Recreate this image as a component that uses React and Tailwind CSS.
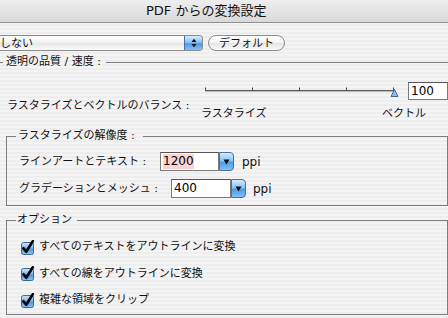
import React from 'react';

const aquaBlue =
  'bg-[linear-gradient(to_bottom,#d4ebff_0%,#8cc3f4_45%,#4d9be8_55%,#7fc0f8_100%)]';

function GroupHeader({ title, lead = 'w-[10px]', gap = 'ml-[3px]', tail = 'ml-[7px]' }) {
  return (
    <div className="flex items-start h-[14px] relative z-10">
      <div className={`${lead} h-px bg-[#7d7d7d] mt-[7px]`} />
      <span className={`${gap} leading-[14px] text-[11px] text-[#111] whitespace-nowrap`}>{title}</span>
      <div className={`${tail} flex-1 h-px bg-[#7d7d7d] mt-[7px]`} />
    </div>
  );
}

function DropButton() {
  return (
    <div
      className={`w-[15px] h-[19px] border border-[#4a6f9a] rounded-r-[4px] flex items-center justify-center ${aquaBlue}`}
    >
      <svg width="7" height="6" viewBox="0 0 7 6">
        <path d="M0.5 0.5 L6.5 0.5 L3.5 5.5 Z" fill="#111" />
      </svg>
    </div>
  );
}

function NumberField({ value, width, highlight }) {
  return (
    <div className="flex items-center">
      <div
        className={`${width} h-[19px] bg-white border border-[#7a7a7a] border-t-[#555] flex items-center pl-[2px]`}
      >
        <span
          className={`text-[12px] leading-[15px] text-black ${highlight ? 'bg-[#fbd3d3]' : ''}`}
        >
          {value}
        </span>
      </div>
      <DropButton />
    </div>
  );
}

function Check({ label }) {
  return (
    <div className="flex items-center h-[14px]">
      <svg width="15" height="15" viewBox="0 0 15 15" className="shrink-0">
        <defs>
          <linearGradient id="cbg" x1="0" y1="0" x2="0" y2="1">
            <stop offset="0" stopColor="#cfe6fd" />
            <stop offset="0.45" stopColor="#7db8f0" />
            <stop offset="0.55" stopColor="#4796e3" />
            <stop offset="1" stopColor="#8cc6f7" />
          </linearGradient>
        </defs>
        <rect x="1.5" y="2.5" width="12" height="12" rx="2" fill="url(#cbg)" stroke="#3f6690" />
        <path
          d="M3.5 8.2 L6.2 11.8 L12.8 1.2"
          fill="none"
          stroke="#000"
          strokeWidth="2.6"
          strokeLinecap="round"
          strokeLinejoin="round"
        />
      </svg>
      <span className="ml-[4px] text-[11px] leading-[14px] text-[#111] whitespace-nowrap">{label}</span>
    </div>
  );
}

export default function App() {
  return (
    <div className="w-[448px] h-[318px] overflow-hidden font-['DejaVu_Sans','Noto_Sans_CJK_JP',sans-serif] bg-[repeating-linear-gradient(to_bottom,#ededed_0px,#ededed_2px,#f4f4f4_2px,#f4f4f4_4px)]">
      {/* title bar */}
      <div className="h-[23px] border-b border-[#8f8f8f] bg-[linear-gradient(to_bottom,#eeeeee,#d9d9d9)] flex items-center">
        <span className="pl-[146px] text-[13px] leading-[16px] text-[#111] whitespace-nowrap">PDF からの変換設定</span>
      </div>

      {/* popup + default button */}
      <div className="flex items-center mt-[12px] h-[16px]">
        <div className="w-[203px] h-[16px] flex border border-l-0 border-[#8a8a8a] rounded-r-[4px] overflow-hidden">
          <div className="flex-1 bg-[linear-gradient(to_bottom,#ffffff,#f0f0f0_50%,#e6e6e6_51%,#fbfbfb)] flex items-center">
            <span className="text-[11px] leading-[13px] text-[#111]">しない</span>
          </div>
          <div className={`w-[18px] border-l border-[#4a6f9a] flex items-center justify-center ${aquaBlue}`}>
            <svg width="6" height="10" viewBox="0 0 6 10">
              <path d="M0.5 4 L3 0.8 L5.5 4 Z" fill="#111" />
              <path d="M0.5 6 L3 9.2 L5.5 6 Z" fill="#111" />
            </svg>
          </div>
        </div>
        <div className="ml-[5px] w-[77px] h-[16px] rounded-full border border-[#8a8a8a] bg-[linear-gradient(to_bottom,#ffffff,#f2f2f2_50%,#e4e4e4_51%,#fafafa)] flex items-center justify-center">
          <span className="text-[11px] leading-[13px] text-[#111]">デフォルト</span>
        </div>
      </div>

      {/* transparency quality */}
      <div className="mt-[4px]">
        <GroupHeader title="透明の品質 / 速度 :" lead="w-[3px]" gap="ml-[3px]" tail="ml-[5px]" />
        <div className="flex h-[60px]">
          <div className="w-[204px] pl-[7px] pt-[23px]">
            <span className="text-[11px] leading-[13px] text-[#111] whitespace-nowrap">
              ラスタライズとベクトルのバランス :
            </span>
          </div>
          <div className="w-[205px]">
            <svg width="205" height="14" viewBox="0 0 205 14" className="mt-[16px]">
              <line x1="2" y1="5.5" x2="191" y2="5.5" stroke="#5c5c5c" />
              <line x1="2" y1="6.5" x2="191" y2="6.5" stroke="#bdbdbd" />
              {[2.5, 49.5, 96.5, 143.5, 190.5].map((x) => (
                <line key={x} x1={x} y1="2.5" x2={x} y2="5.5" stroke="#444" />
              ))}
              <path d="M191.5 4.5 L195 11.5 L188 11.5 Z" fill="#8cc1f2" stroke="#41668f" strokeLinejoin="round" />
            </svg>
            <div className="flex mt-[8px] text-[11px] leading-[13px] text-[#111] whitespace-nowrap">
              <span className="-ml-[2px] w-[181px] shrink-0">ラスタライズ</span>
              <span className="shrink-0">ベクトル</span>
            </div>
          </div>
          <div className="mt-[13px] h-[18px] w-[40px] shrink-0 bg-white border border-[#7a7a7a] border-t-[#555] flex items-center pl-[2px]">
            <span className="text-[12px] leading-[15px] text-black">100</span>
          </div>
        </div>
      </div>

      {/* rasterize resolution */}
      <div className="ml-[6px]">
        <GroupHeader title="ラスタライズの解像度 :" lead="w-[10px]" gap="ml-[2px]" tail="ml-[8px]" />
        <div className="-mt-[7px] pt-[16px] h-[70px] border-x border-b border-[#7d7d7d]">
          <div className="flex items-center h-[19px] pl-[12px]">
            <span className="w-[141px] text-[11px] leading-[13px] text-[#111] whitespace-nowrap">
              ラインアートとテキスト :
            </span>
            <NumberField value="1200" width="w-[59px]" highlight />
            <span className="ml-[8px] text-[12px] leading-[14px] text-[#111]">ppi</span>
          </div>
          <div className="flex items-center h-[19px] pl-[12px] mt-[8px]">
            <span className="w-[152px] text-[11px] leading-[13px] text-[#111] whitespace-nowrap">
              グラデーションとメッシュ :
            </span>
            <NumberField value="400" width="w-[60px]" />
            <span className="ml-[7px] text-[12px] leading-[14px] text-[#111]">ppi</span>
          </div>
        </div>
      </div>

      {/* options */}
      <div className="ml-[6px] mt-[7px]">
        <GroupHeader title="オプション" lead="w-[10px]" gap="ml-[1px]" tail="ml-[5px]" />
        <div className="-mt-[7px] pt-[20px] h-[95px] border-x border-b border-[#7d7d7d] pl-[13px] flex flex-col gap-[12.5px]">
          <Check label="すべてのテキストをアウトラインに変換" />
          <Check label="すべての線をアウトラインに変換" />
          <Check label="複雑な領域をクリップ" />
        </div>
      </div>
    </div>
  );
}
